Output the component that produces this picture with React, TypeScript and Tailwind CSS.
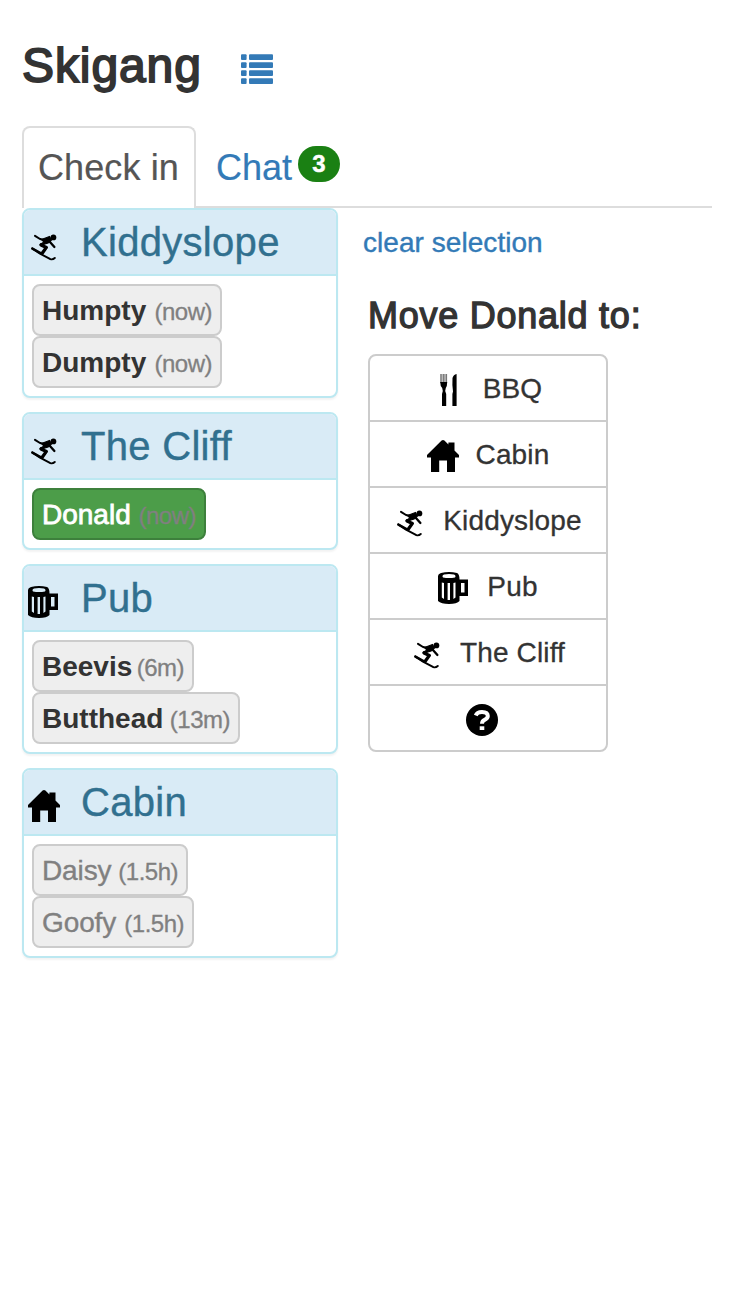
import type { ReactNode } from "react";

type IconName = "ski" | "mug" | "house" | "cutlery" | "question";

function Icon({ name }: { name: IconName }) {
  return (
    <svg className="block size-8 shrink-0" viewBox="0 0 32 32" fill="none" stroke="#000" strokeLinecap="round" strokeLinejoin="round">
      {name === "ski" && (
        <>
          <circle cx="25.4" cy="7.4" r="2.9" fill="#000" stroke="none" />
          <path d="M7 5.8l5 3.2 4.5 1" strokeWidth="2" />
          <path d="M13.5 9.6l8-3.2 2 3.6-3.4 3-4.6 1.6-3.5-.2 4-2.4z" fill="#000" strokeWidth="1.1" />
          <path d="M21.5 11.4l4.9 5.6" strokeWidth="2.3" />
          <path d="M13 15l5.4 2.4-4.2 5.8" strokeWidth="3.3" />
          <path d="M4.2 18.4L12 23.6 22.4 29.2q2.4.6 4.4-1.2" strokeWidth="1.9" />
          <path d="M4.4 18.6l8.6 4.6" strokeWidth="2.4" />
        </>
      )}
      {name === "mug" && (
        <path fill="#000" stroke="none" fillRule="evenodd" d="M3 1Q11 -1 19 1Q21.5 2 21.5 7.5H30V24H21.5V29Q19 32 11 32Q3 32 0 29V4Q0 2 3 1ZM6 2.4Q3.6 3.7 5 5.4Q11 6.4 17 5.4Q18.4 3.7 16 2.4Q11 1.4 6 2.4ZM3.8 10.5V25.5L6 27V11ZM9.6 11V28H12V11ZM15.4 11V27L17.5 25.5V10.5ZM23 11V20.5H26.5V11Z" />
      )}
      {name === "house" && (
        <path fill="#000" stroke="none" d="M14.6 .6Q16 -.6 17.4 .6L21.4 4.4V2.5H27.5V10.5L32 15V17.5H28V32H20V20.5H12.2V32H4V17.5H0V15Z" />
      )}
      {name === "cutlery" && (
        <>
          <path stroke="#bbb" strokeWidth="7" strokeLinecap="butt" d="M9.7 0V9" />
          <path stroke="#777" strokeWidth="1.2" strokeLinecap="butt" d="M7 0V9M9.7 0V9M12.4 0V9" />
          <path fill="#000" stroke="none" d="M6.2 8H13.2Q13.2 12 11.8 14L11.2 17L12.2 20V32H8V20L8.8 17L8.2 14Q6.2 12 6.2 8Z" />
          <path fill="#000" stroke="none" d="M18.5 4Q19.5 0.5 22.6 0V32H18.4V20L19 17.5Q18 12 18.5 4Z" />
        </>
      )}
      {name === "question" && (
        <>
          <circle cx="16" cy="16" r="16" fill="#000" stroke="none" />
          <path stroke="#fff" strokeWidth="4" strokeLinecap="butt" d="M9.8 11.5Q11 8 16 8Q21.8 8 21.8 12Q21.8 14.4 18.6 15.8Q16 17 16 19.8" />
          <path stroke="#fff" strokeWidth="4.6" strokeLinecap="butt" d="M16 22.3V26" />
        </>
      )}
    </svg>
  );
}

function Person({ name, time, look, width }: { name: string; time: string; look: "bold" | "old" | "selected"; width: string }) {
  const box = look === "selected" ? "border-[#3d803c] bg-[#4c9d49] text-white" : "border-[#ccc] bg-[#eee]";
  const tone =
    look === "bold"
      ? "font-bold text-[#333]"
      : look === "old"
        ? "tracking-[-0.1px] text-[#808080] [-webkit-text-stroke:0.35px_#808080]"
        : "text-white [-webkit-text-stroke:0.8px_#fff]";
  return (
    <button className={`flex h-[52px] items-baseline justify-between whitespace-nowrap rounded-lg border-2 px-2 text-[28px] leading-[50px] ${width} ${box}`}>
      <span className={tone}>{name}</span>
      <span className="text-2xl leading-[48px] tracking-[-0.5px] text-[#808080] [-webkit-text-stroke:0.3px_#808080]">({time})</span>
    </button>
  );
}

function Place({ icon, title, children }: { icon: IconName; title: string; children: ReactNode }) {
  return (
    <section className="overflow-hidden rounded-lg border-2 border-[#bce8f1] bg-white shadow-[0_2px_2px_rgba(0,0,0,0.05)]">
      <header className="flex h-[66px] items-start border-b-2 border-[#bce8f1] bg-[#d9ebf6] pl-1">
        <div className="pt-5"><Icon name={icon} /></div>
        <h3 className="ml-[21px] text-[40px] leading-[64px] tracking-[0.3px] text-[#31708f] [-webkit-text-stroke:0.4px_#31708f]">{title}</h3>
      </header>
      <div className="flex flex-col p-2">{children}</div>
    </section>
  );
}

const targets: { icon: IconName; label: string }[] = [
  { icon: "cutlery", label: "BBQ" },
  { icon: "house", label: "Cabin" },
  { icon: "ski", label: "Kiddyslope" },
  { icon: "mug", label: "Pub" },
  { icon: "ski", label: "The Cliff" },
  { icon: "question", label: "" },
];

export default function App() {
  return (
    <main className="h-[1300px] w-[736px] overflow-hidden bg-white pl-[22px] pr-6 font-['Liberation_Sans',Arial,sans-serif] text-[#333]">
      <div className="flex h-[126px] items-start">
        <h1 className="w-[219px] pt-[38px] text-[48px] leading-[56px] tracking-[0.9px] [-webkit-text-stroke:1.8px_#333]">Skigang</h1>
        <svg className="mt-[54px] h-[30px] w-8" viewBox="0 0 32 30" fill="#337ab7">
          {[0, 8, 16, 24].map((y) => (
            <g key={y}>
              <rect x="0" y={y + 0.3} width="5.6" height="5.6" rx="1" />
              <rect x="8" y={y + 0.3} width="24" height="5.6" rx="1" />
            </g>
          ))}
        </svg>
      </div>
      <nav className="flex h-[82px] text-[36px] leading-[79px]">
        <span className="w-[174px] rounded-t-lg border-2 border-b-0 border-[#ddd] pl-3.5 tracking-[0.1px] text-[#555] [-webkit-text-stroke:0.2px_#555]">Check in</span>
        <span className="flex flex-1 items-start border-b-2 border-[#ddd] pl-5 pt-0.5 text-[#337ab7] [-webkit-text-stroke:0.2px_#337ab7]">
          Chat
          <span className="ml-1.5 mt-[18px] flex h-9 w-[42px] items-center justify-center rounded-[18px] bg-[#1a8013] text-2xl font-bold leading-none text-white [-webkit-text-stroke:0.4px_#fff]">3</span>
        </span>
      </nav>
      <div className="flex items-start">
        <div className="flex w-[316px] flex-col gap-3.5">
          <Place icon="ski" title="Kiddyslope">
            <Person name="Humpty" time="now" look="bold" width="w-[190px]" />
            <Person name="Dumpty" time="now" look="bold" width="w-[190px]" />
          </Place>
          <Place icon="ski" title="The Cliff">
            <Person name="Donald" time="now" look="selected" width="w-[174px]" />
          </Place>
          <Place icon="mug" title="Pub">
            <Person name="Beevis" time="6m" look="bold" width="w-[162px]" />
            <Person name="Butthead" time="13m" look="bold" width="w-[208px]" />
          </Place>
          <Place icon="house" title="Cabin">
            <Person name="Daisy" time="1.5h" look="old" width="w-[156px]" />
            <Person name="Goofy" time="1.5h" look="old" width="w-[162px]" />
          </Place>
        </div>
        <div className="ml-[25px]">
          <a className="block pt-[19px] text-[28px] leading-8 tracking-[0.05px] text-[#337ab7] [-webkit-text-stroke:0.4px_#337ab7]">clear selection</a>
          <h2 className="ml-[5px] mt-[35px] text-[36px] leading-[44px] tracking-[0.75px] [-webkit-text-stroke:1.3px_#333]">Move Donald to:</h2>
          <div className="ml-[5px] mt-4 w-60 divide-y-2 divide-[#ccc] rounded-lg border-2 border-[#ccc]">
            {targets.map((t) => (
              <button key={t.icon + t.label} className="flex h-[66px] w-full justify-center text-[28px] leading-[66px] last:h-16">
                <span className="pt-[18px]"><Icon name={t.icon} /></span>
                <span className={t.label ? "ml-[17px] tracking-[0.15px] [-webkit-text-stroke:0.3px_#333]" : "ml-3"}>{t.label}</span>
              </button>
            ))}
          </div>
        </div>
      </div>
    </main>
  );
}
